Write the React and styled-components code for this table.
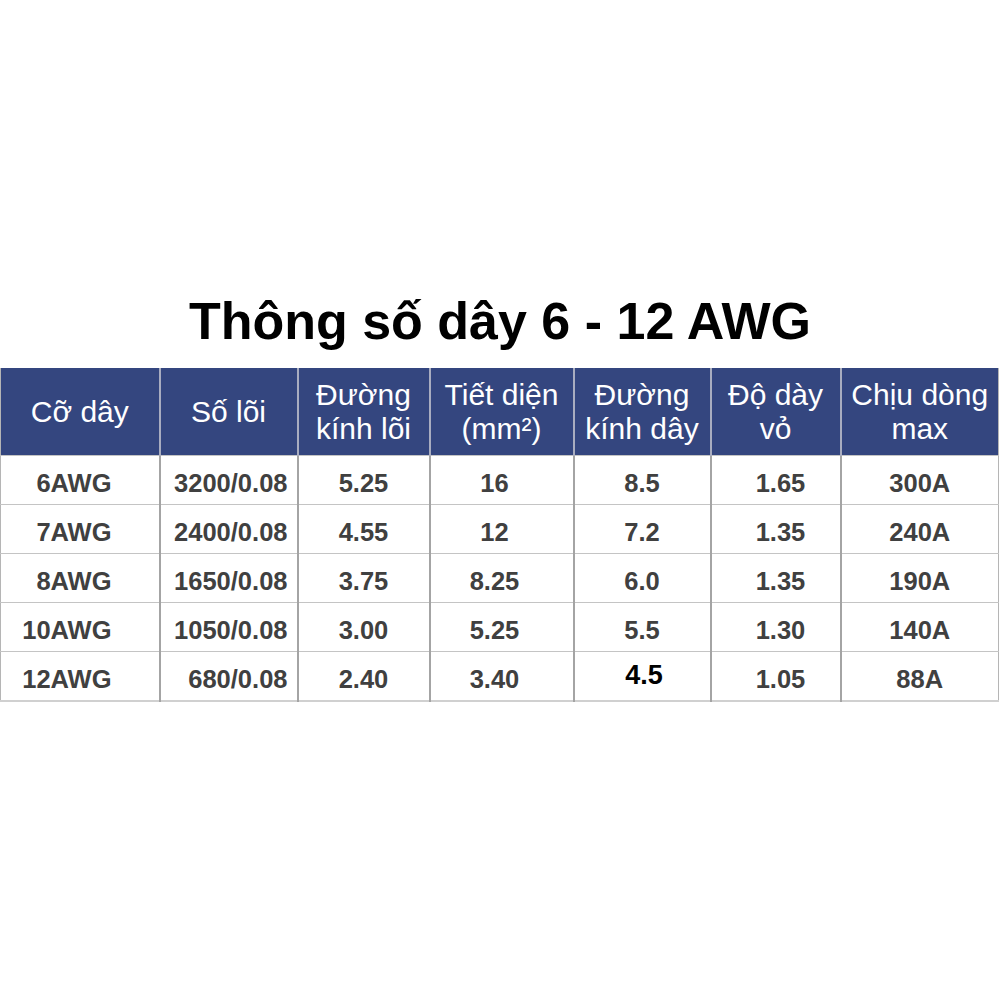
import React from "react";
import styled, { createGlobalStyle } from "styled-components";

const GlobalStyle = createGlobalStyle`
  body {
    margin: 0;
    background: #ffffff;
    font-family: "Liberation Sans", Arial, sans-serif;
  }
`;

// whole picture, title on top and the spec table under it
const Page = styled.div`
  width: 1000px;
  height: 1000px;
  padding-top: 291px;
  box-sizing: border-box;
  background: #fff;
`;

const Title = styled.h1`
  margin: 0 0 17px;
  font-size: 52px;
  line-height: 60px;
  font-weight: 700;
  text-align: center;
  color: #000;
`;

const Table = styled.table`
  width: 998px;
  border-collapse: collapse;
  table-layout: fixed;
  border-left: 1px solid #b5b5b5;
  border-right: 1px solid #b5b5b5;
  border-bottom: 2px solid #d0d0d0;
`;

const HeadCell = styled.th`
  height: 87px;
  padding: 0;
  background: #34467f;
  color: #fff;
  font-weight: 400;
  font-size: 30px;
  line-height: 34px;
  text-align: center;
  vertical-align: middle;
  white-space: nowrap;
  border-left: 2px solid #a9adc0;
  &:first-child {
    border-left: none;
  }
`;

const Cell = styled.td`
  height: 49px;
  padding: 7px ${(p) => p.$pr || 0}px 0 ${(p) => p.$pl || 0}px;
  box-sizing: border-box;
  font-size: 25.5px;
  font-weight: 700;
  color: #404040;
  text-align: ${(p) => p.$align || "center"};
  vertical-align: middle;
  border-left: 2px solid #a4a4a4;
  border-top: 1px solid #c4c4c4;
  &:first-child {
    border-left: none;
  }
`;

const Highlight = styled.span`
  display: inline-block;
  font-size: 27px;
  color: #000;
  transform: translate(2px, -4px);
`;

const columns = [
  { w: 159, head: ["Cỡ dây"], align: "right", pr: 47 },
  { w: 138, head: ["Số lõi"], align: "right", pr: 9 },
  { w: 132, head: ["Đường", "kính lõi"] },
  { w: 144, head: ["Tiết diện", "(mm²)"], pr: 14 },
  { w: 137, head: ["Đường", "kính dây"] },
  { w: 130, head: ["Độ dày", "vỏ"], pl: 10 },
  { w: 158, head: ["Chịu dòng", "max"] },
];

const rows = [
  ["6AWG", "3200/0.08", "5.25", "16", "8.5", "1.65", "300A"],
  ["7AWG", "2400/0.08", "4.55", "12", "7.2", "1.35", "240A"],
  ["8AWG", "1650/0.08", "3.75", "8.25", "6.0", "1.35", "190A"],
  ["10AWG", "1050/0.08", "3.00", "5.25", "5.5", "1.30", "140A"],
  ["12AWG", "680/0.08", "2.40", "3.40", "4.5", "1.05", "88A"],
];

const App = () => {
  return (
    <Page>
      <GlobalStyle />
      <Title>Thông số dây 6 - 12 AWG</Title>
      <Table>
        <colgroup>
          {columns.map((c, i) => (
            <col key={i} style={{ width: c.w }} />
          ))}
        </colgroup>
        <thead>
          <tr>
            {columns.map((c, i) => (
              <HeadCell key={i}>
                {c.head.map((line, j) => (
                  <React.Fragment key={j}>
                    {j > 0 && <br />}
                    {line}
                  </React.Fragment>
                ))}
              </HeadCell>
            ))}
          </tr>
        </thead>
        <tbody>
          {rows.map((r, ri) => (
            <tr key={ri}>
              {r.map((v, ci) => (
                <Cell
                  key={ci}
                  $align={columns[ci].align}
                  $pr={columns[ci].pr}
                  $pl={columns[ci].pl}
                >
                  {ri === 4 && ci === 4 ? <Highlight>{v}</Highlight> : v}
                </Cell>
              ))}
            </tr>
          ))}
        </tbody>
      </Table>
    </Page>
  );
};

export default App;
